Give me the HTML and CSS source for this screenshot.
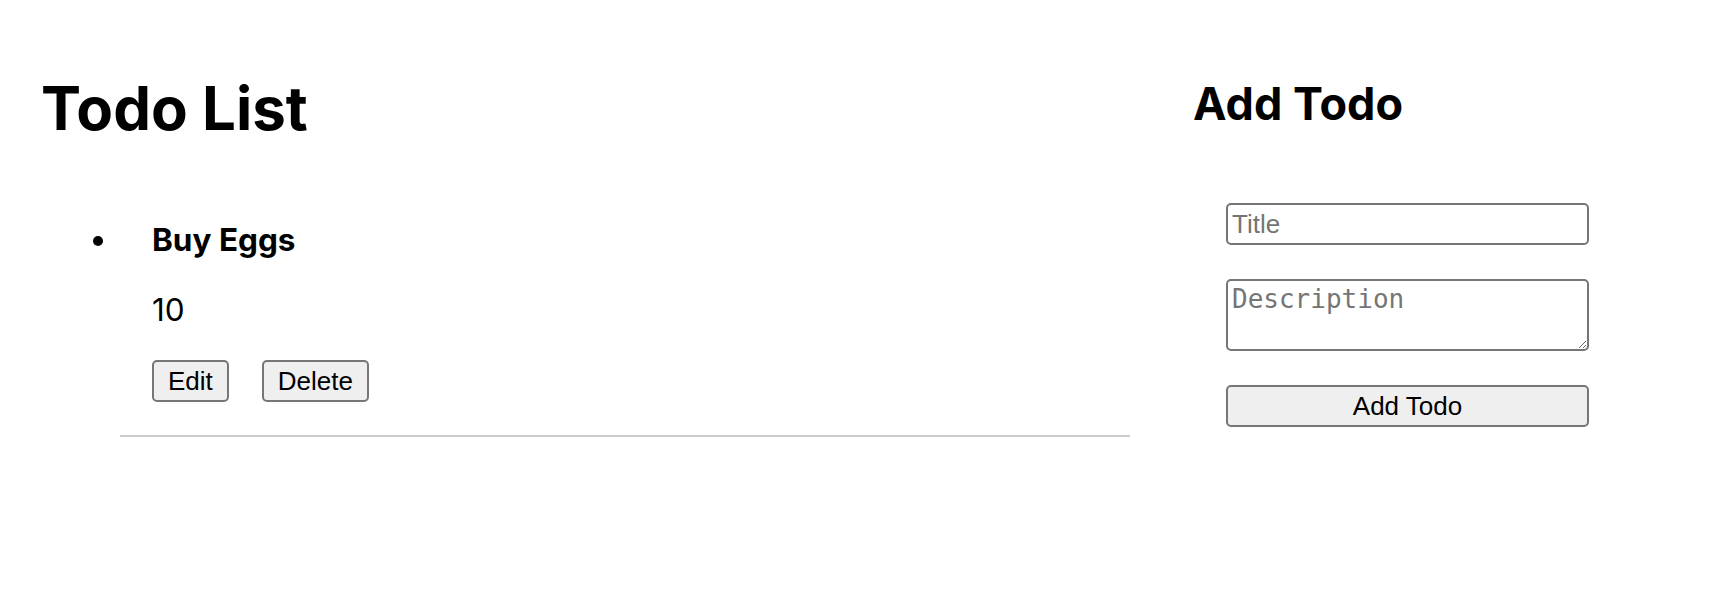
FILE: index.html
```html
<!DOCTYPE html>
<html lang="en">
<head>
    <meta charset="UTF-8">
    <meta name="viewport" content="width=device-width, initial-scale=1.0">
    <title>Todo List</title>
    <link rel="stylesheet" href="styles.css">
</head>
<body>
    <div class="app">
        <!-- Todo list -->
        <div class="todos">
            <h1>Todo List</h1>

            <div class="todo-list">
                <div class="todo-item">
                    <span class="bullet"></span>
                    <div class="todo-body">
                        <h3 class="todo-title">Buy Eggs</h3>
                        <p class="todo-desc">10</p>
                        <div class="todo-actions">
                            <button>Edit</button>
                            <button>Delete</button>
                        </div>
                    </div>
                </div>
            </div>
            <hr>
        </div>

        <!-- Add todo form -->
        <div class="add-todo">
            <h2>Add Todo</h2>
            <form class="todo-form">
                <input type="text" placeholder="Title">
                <textarea placeholder="Description"></textarea>
                <button type="submit">Add Todo</button>
            </form>
        </div>
    </div>
</body>
</html>
```

FILE: styles.css
```css
body {
    margin: 0;
    font-family: Inter, 'Noto Sans', sans-serif;
    color: #000;
    background-color: #fff;
}
.app {
    display: flex;
    padding-left: 41px;
}
.todos {
    width: 1089px;
    padding-top: 72px;
}
h1 {
    margin: 0;
    font-size: 60px;
    line-height: 73px;
    font-weight: 700;
}
.todo-list {
    margin: 76px 0 0 52px;
}
.todo-item {
    display: flex;
}
.bullet {
    width: 10px;
    height: 10px;
    margin: 15px 49px 0 0;
    border-radius: 50%;
    background-color: #000;
    flex-shrink: 0;
}
.todo-title {
    margin: 0;
    font-size: 31.5px;
    line-height: 38px;
    font-weight: 700;
}
.todo-desc {
    margin: 33px 0 0;
    font-size: 31.5px;
    line-height: 36px;
}
.todo-actions {
    display: flex;
    gap: 33px;
    margin-top: 32px;
}
button, input, textarea {
    box-sizing: border-box;
    border: 2px solid #767676;
    border-radius: 5px;
}
button {
    height: 42px;
    padding: 0 14px;
    font-family: 'Liberation Sans', Arial, sans-serif;
    font-size: 26px;
    color: #000;
    background-color: #efefef;
}
hr {
    margin: 33px 0 0 79px;
    height: 0;
    border: none;
    border-top: 2px solid #ccc;
}
.add-todo {
    margin-left: 63px;
    padding-top: 76px;
}
h2 {
    margin: 0;
    font-size: 45px;
    line-height: 55px;
    font-weight: 700;
}
.todo-form {
    display: flex;
    flex-direction: column;
    gap: 34px;
    width: 363px;
    margin: 72px 0 0 33px;
}
input {
    height: 42px;
    padding: 0 4px;
    font-family: 'Liberation Sans', Arial, sans-serif;
    font-size: 26px;
}
textarea {
    height: 72px;
    padding: 3px 4px;
    font-family: 'DejaVu Sans Mono', monospace;
    font-size: 26px;
}
input::placeholder, textarea::placeholder {
    color: #757575;
}
.todo-form button {
    width: 100%;
}
```
